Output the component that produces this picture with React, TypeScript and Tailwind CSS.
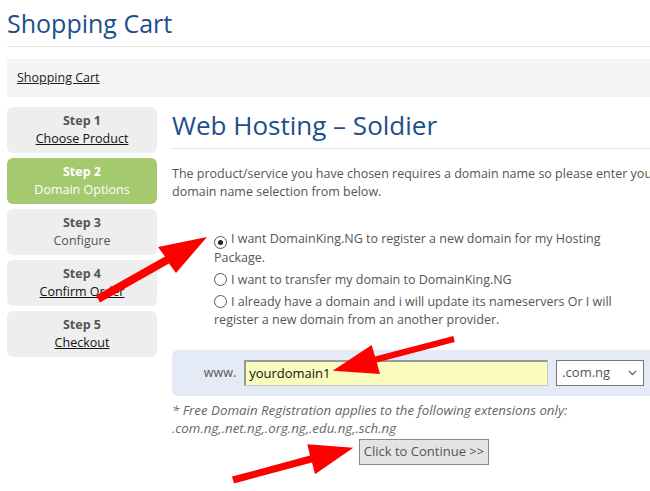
const steps = [
  { step: "Step 1", label: "Choose Product", link: true },
  { step: "Step 2", label: "Domain Options", active: true },
  { step: "Step 3", label: "Configure" },
  { step: "Step 4", label: "Confirm Order", link: true },
  { step: "Step 5", label: "Checkout", link: true },
];

const Radio = ({ checked }: { checked?: boolean }) => (
  <span className="inline-flex items-center justify-center w-[13px] h-[13px] rounded-full border border-[#555] bg-white mr-[4px] align-[-2px]">
    {checked && <span className="w-[5px] h-[5px] rounded-full bg-[#222]" />}
  </span>
);

const Arrows = () => (
  <svg className="absolute left-0 top-0 pointer-events-none" width="650" height="491">
    <polygon
      fill="#ff0000"
      points="96,295.5 165,256.5 158,247 207,237 176,273 169,263.5 100,302.5"
    />
    <polygon
      fill="#ff0000"
      points="453.3,336 375,356.6 371.7,345 332.7,370.7 380,374 376.8,362.4 454.8,342"
    />
    <polygon
      fill="#ff0000"
      points="232,476.6 310,455.6 307.3,444.3 353.3,447.7 315,474.3 312,462.4 234,483.4"
    />
  </svg>
);

export default function App() {
  return (
    <div className="relative w-[650px] h-[491px] overflow-hidden bg-white font-['Open_Sans',sans-serif] text-[12.5px] text-[#555]">
      <div className="w-[690px] pl-[7px]">
        <h1 className="text-[25px] leading-[34px] pt-[6px] pb-[6px] text-[#1d4f8c] border-b border-[#e5e5e5]">
          Shopping Cart
        </h1>
        <div className="mt-[12px] h-[38px] bg-[#f4f4f4] flex items-center pl-[10px]">
          <a className="underline text-[#222]">Shopping Cart</a>
        </div>

        <div className="flex gap-[15px] mt-[10px]">
          <div className="w-[150px] flex flex-col gap-[5px]">
            {steps.map((s) => (
              <div
                key={s.step}
                className={
                  s.active
                    ? "rounded-[6px] bg-[#a5c96e] text-white text-center py-[5px] leading-[18px]"
                    : "rounded-[6px] bg-[#eeeeee] text-[#555] text-center py-[5px] leading-[18px]"
                }
              >
                <div className="font-bold">{s.step}</div>
                <div className={s.link ? "underline text-[#111]" : ""}>{s.label}</div>
              </div>
            ))}
          </div>

          <div className="w-[504px]">
            <h2 className="text-[26px] leading-[34px] pt-[1px] pb-[6px] text-[#1d4f8c] border-b border-[#e5e5e5]">
              Web Hosting – Soldier
            </h2>
            <p className="mt-[16px] leading-[18px] whitespace-nowrap">
              The product/service you have chosen requires a domain name so please enter your
              <br />
              domain name selection from below.
            </p>

            <div className="mt-[29px] pl-[42px] leading-[18px] whitespace-nowrap flex flex-col gap-[4px]">
              <div>
                <Radio checked />I want DomainKing.NG to register a new domain for my Hosting
                <br />
                Package.
              </div>
              <div>
                <Radio />I want to transfer my domain to DomainKing.NG
              </div>
              <div>
                <Radio />I already have a domain and i will update its nameservers Or I will
                <br />
                register a new domain from an another provider.
              </div>
            </div>

            <div className="mt-[21px] h-[46px] rounded-[6px] bg-[#e5ebf6] flex items-center justify-center gap-[8px]">
              <span className="text-[#555]">www.</span>
              <div className="w-[304px] h-[26px] bg-[#f9fcbd] border border-[#c8c8c8] border-t-[#999] border-l-[#999] border-t-2 border-l-2 flex items-center pl-[3px] text-[13px] text-[#111]">
                yourdomain1
              </div>
              <div className="w-[88px] h-[26px] bg-white border border-[#777] flex items-center justify-between pl-[5px] pr-[6px] text-[13px] text-[#555]">
                <span>.com.ng</span>
                <svg width="9" height="6" viewBox="0 0 9 6">
                  <path d="M1 1l3.5 3.5L8 1" fill="none" stroke="#666" strokeWidth="1.3" />
                </svg>
              </div>
            </div>

            <p className="mt-[5px] italic text-[13.3px] leading-[18px] text-[#666] whitespace-nowrap">
              * Free Domain Registration applies to the following extensions only:
              <br />
              .com.ng,.net.ng,.org.ng,.edu.ng,.sch.ng
            </p>

            <div className="mt-[2px] flex justify-center">
              <button className="h-[26px] px-[4px] bg-[#e4e4e4] border border-[#888] text-[13px] text-[#555]">
                Click to Continue &gt;&gt;
              </button>
            </div>
          </div>
        </div>
      </div>
      <Arrows />
    </div>
  );
}
